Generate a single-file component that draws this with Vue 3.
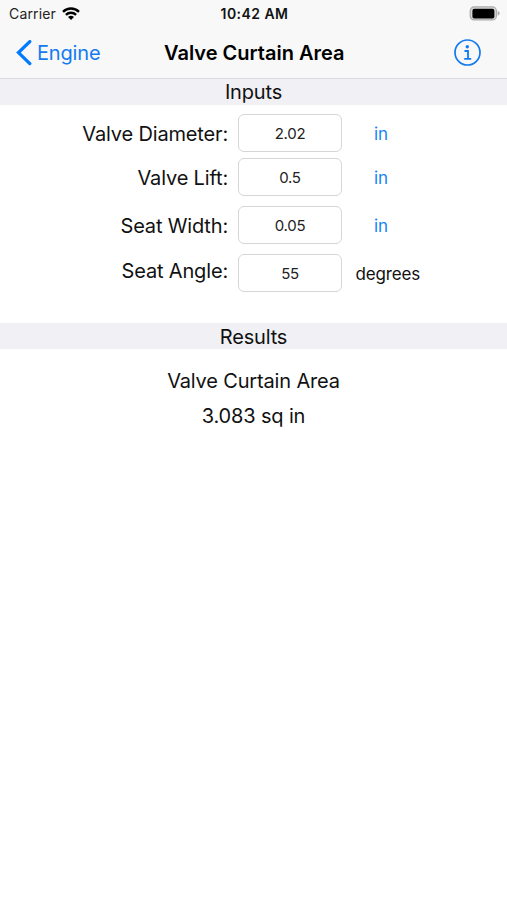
<script setup>
import { ref } from 'vue'

const inputs = ref([
  { key: 'diameter', label: 'Valve Diameter:', value: '2.02', unit: 'in', link: true },
  { key: 'lift', label: 'Valve Lift:', value: '0.5', unit: 'in', link: true },
  { key: 'width', label: 'Seat Width:', value: '0.05', unit: 'in', link: true },
  { key: 'angle', label: 'Seat Angle:', value: '55', unit: 'degrees', link: false },
])
</script>

<template>
  <main class="screen">
    <header class="top">
      <div class="status">
        <div class="carrier">
          <span>Carrier</span>
          <svg width="18" height="14" viewBox="0 0 18 14" fill="none" stroke="#000" stroke-width="2.4">
            <path d="M1 4.8C5.5.4 12.5.4 17 4.8" />
            <path d="M3.9 7.9C6.8 5.1 11.2 5.1 14.1 7.9" />
            <path d="M9 12.9L6 9.9Q9 7.4 12 9.9Z" fill="#000" stroke="none" />
          </svg>
        </div>
        <span class="time">10:42 AM</span>
        <svg class="battery" width="31" height="16" viewBox="0 0 31 16">
          <rect x="1.2" y="0.9" width="26.2" height="13" rx="4" fill="#d8d8d6" stroke="#aaa" stroke-width="1.2" />
          <rect x="3.4" y="2.8" width="22" height="9.6" rx="2" fill="#000" />
          <path d="M28.6 4.8Q30.6 5.6 30.6 7.3T28.6 9.8Z" fill="#aaa" />
        </svg>
      </div>
      <nav class="nav">
        <a class="back">
          <svg width="16" height="26" viewBox="0 0 16 26" fill="none" stroke="#007aff" stroke-width="3.3" stroke-linecap="round">
            <path d="M13.8 1.6L2.5 12.6L13.8 23.6" />
          </svg>
          <span>Engine</span>
        </a>
        <h1 class="title">Valve Curtain Area</h1>
        <svg class="info" width="28" height="28" viewBox="0 0 28 28" fill="none" stroke="#137bf0">
          <circle cx="14.5" cy="13.5" r="12.5" stroke-width="1.7" />
          <circle cx="14.3" cy="7.7" r="1.7" fill="#137bf0" stroke="none" />
          <path d="M11.5 12H15V19.8M11.2 19.9H18.2" stroke-width="1.8" />
        </svg>
      </nav>
    </header>

    <h2 class="section inputs-heading">Inputs</h2>
    <form class="form">
      <label v-for="item in inputs" :key="item.key" class="row" :class="item.key">
        <span class="label">{{ item.label }}</span>
        <input v-model="item.value" class="field" type="text" />
        <span class="unit" :class="{ link: item.link }">{{ item.unit }}</span>
      </label>
    </form>

    <h2 class="section">Results</h2>
    <section class="results">
      <p>Valve Curtain Area</p>
      <p>3.083 sq in</p>
    </section>
  </main>
</template>

<style>
body {
  background: #fff;
}
</style>

<style scoped>
.screen {
  height: 900px;
  overflow: hidden;
  background: #fff;
  color: #111;
  font-family: Inter, "Liberation Sans", sans-serif;
  font-size: 20px;
  letter-spacing: -0.16px;
}
.top {
  height: 79px;
  box-sizing: border-box;
  background: #f8f8f8;
  border-bottom: 1px solid #dcdcde;
}
.status,
.nav {
  display: grid;
  grid-template-columns: 1fr auto 1fr;
  align-items: center;
}
.status {
  height: 27px;
  padding: 0 7px 0 9px;
}
.carrier {
  display: flex;
  align-items: center;
  gap: 6px;
  font-size: 14px;
  letter-spacing: 0.15px;
  color: #222;
}
.time {
  font-size: 14px;
  font-weight: 600;
  letter-spacing: 0.45px;
}
.battery {
  justify-self: end;
}
.nav {
  height: 51px;
  padding: 0 26px 0 16px;
  grid-template-columns: 148px auto 1fr;
}
.back {
  display: flex;
  align-items: center;
  gap: 5px;
  color: #137bf0;
}
.title {
  margin: 0;
  font-size: 20px;
  font-weight: 600;
  letter-spacing: 0;
  color: #000;
}
.info {
  justify-self: end;
}
.section {
  height: 26px;
  margin: 0;
  background: #f0f0f5;
  font-size: 20px;
  font-weight: 400;
  line-height: 28px;
  text-align: center;
}
.inputs-heading {
  line-height: 27px;
}
.form {
  display: flex;
  flex-direction: column;
  height: 218px;
  padding-top: 9px;
  box-sizing: border-box;
}
.row {
  display: grid;
  grid-template-columns: 228px 104px 1fr;
  column-gap: 10px;
  align-items: center;
  height: 38px;
}
.lift {
  margin-top: 6px;
}
.width {
  margin-top: 10px;
}
.angle {
  margin-top: 10px;
}
.label {
  padding-top: 1px;
  text-align: right;
  white-space: nowrap;
}
.angle .label {
  padding: 0 0 4px;
}
.field {
  width: 104px;
  height: 38px;
  box-sizing: border-box;
  padding: 0;
  border: 1.5px solid #d6d6d6;
  border-radius: 6px;
  background: #fff;
  color: #222;
  font: 15px Inter, "Liberation Sans", sans-serif;
  letter-spacing: -0.3px;
  text-align: center;
}
.unit {
  font-size: 17px;
  padding: 2px 0 0 3.5px;
}
.unit.link {
  padding-left: 22px;
  color: #1583f5;
}
.results {
  padding-top: 15px;
  text-align: center;
}
.results p {
  margin: 0;
  line-height: 35px;
}
</style>
